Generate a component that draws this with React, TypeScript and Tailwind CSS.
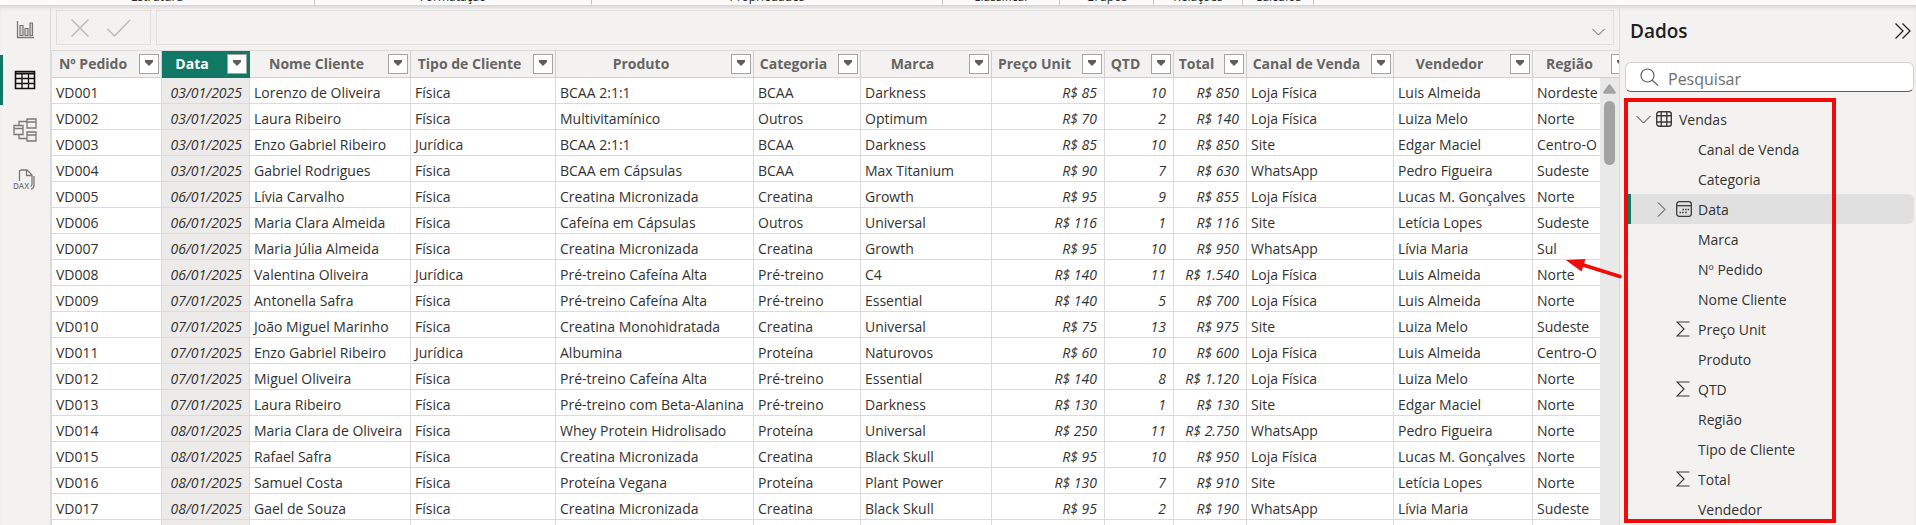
import { useState } from "react";
import { clsx } from "clsx";

type Column = { name: string; width: string; align?: "right"; selected?: boolean };

const columns: Column[] = [
    { name: "Nº Pedido", width: "w-[110px]" },
    { name: "Data", width: "w-[88px]", align: "right", selected: true },
    { name: "Nome Cliente", width: "w-[161px]" },
    { name: "Tipo de Cliente", width: "w-[145px]" },
    { name: "Produto", width: "w-[198px]" },
    { name: "Categoria", width: "w-[107px]" },
    { name: "Marca", width: "w-[131px]" },
    { name: "Preço Unit", width: "w-[113px]", align: "right" },
    { name: "QTD", width: "w-[69px]", align: "right" },
    { name: "Total", width: "w-[73px]", align: "right" },
    { name: "Canal de Venda", width: "w-[147px]" },
    { name: "Vendedor", width: "w-[139px]" },
    { name: "Região", width: "w-[101px]" },
];

const rows: string[][] = [
    ["VD001", "03/01/2025", "Lorenzo de Oliveira", "Física", "BCAA 2:1:1", "BCAA", "Darkness", "R$ 85", "10", "R$ 850", "Loja Física", "Luis Almeida", "Nordeste"],
    ["VD002", "03/01/2025", "Laura Ribeiro", "Física", "Multivitamínico", "Outros", "Optimum", "R$ 70", "2", "R$ 140", "Loja Física", "Luiza Melo", "Norte"],
    ["VD003", "03/01/2025", "Enzo Gabriel Ribeiro", "Jurídica", "BCAA 2:1:1", "BCAA", "Darkness", "R$ 85", "10", "R$ 850", "Site", "Edgar Maciel", "Centro-O"],
    ["VD004", "03/01/2025", "Gabriel Rodrigues", "Física", "BCAA em Cápsulas", "BCAA", "Max Titanium", "R$ 90", "7", "R$ 630", "WhatsApp", "Pedro Figueira", "Sudeste"],
    ["VD005", "06/01/2025", "Lívia Carvalho", "Física", "Creatina Micronizada", "Creatina", "Growth", "R$ 95", "9", "R$ 855", "Loja Física", "Lucas M. Gonçalves", "Norte"],
    ["VD006", "06/01/2025", "Maria Clara Almeida", "Física", "Cafeína em Cápsulas", "Outros", "Universal", "R$ 116", "1", "R$ 116", "Site", "Letícia Lopes", "Sudeste"],
    ["VD007", "06/01/2025", "Maria Júlia Almeida", "Física", "Creatina Micronizada", "Creatina", "Growth", "R$ 95", "10", "R$ 950", "WhatsApp", "Lívia Maria", "Sul"],
    ["VD008", "06/01/2025", "Valentina Oliveira", "Jurídica", "Pré-treino Cafeína Alta", "Pré-treino", "C4", "R$ 140", "11", "R$ 1.540", "Loja Física", "Luis Almeida", "Norte"],
    ["VD009", "07/01/2025", "Antonella Safra", "Física", "Pré-treino Cafeína Alta", "Pré-treino", "Essential", "R$ 140", "5", "R$ 700", "Loja Física", "Luis Almeida", "Norte"],
    ["VD010", "07/01/2025", "João Miguel Marinho", "Física", "Creatina Monohidratada", "Creatina", "Universal", "R$ 75", "13", "R$ 975", "Site", "Luiza Melo", "Sudeste"],
    ["VD011", "07/01/2025", "Enzo Gabriel Ribeiro", "Jurídica", "Albumina", "Proteína", "Naturovos", "R$ 60", "10", "R$ 600", "Loja Física", "Luis Almeida", "Centro-O"],
    ["VD012", "07/01/2025", "Miguel Oliveira", "Física", "Pré-treino Cafeína Alta", "Pré-treino", "Essential", "R$ 140", "8", "R$ 1.120", "Loja Física", "Luiza Melo", "Norte"],
    ["VD013", "07/01/2025", "Laura Ribeiro", "Física", "Pré-treino com Beta-Alanina", "Pré-treino", "Darkness", "R$ 130", "1", "R$ 130", "Site", "Edgar Maciel", "Norte"],
    ["VD014", "08/01/2025", "Maria Clara de Oliveira", "Física", "Whey Protein Hidrolisado", "Proteína", "Universal", "R$ 250", "11", "R$ 2.750", "WhatsApp", "Pedro Figueira", "Norte"],
    ["VD015", "08/01/2025", "Rafael Safra", "Física", "Creatina Micronizada", "Creatina", "Black Skull", "R$ 95", "10", "R$ 950", "Loja Física", "Lucas M. Gonçalves", "Norte"],
    ["VD016", "08/01/2025", "Samuel Costa", "Física", "Proteína Vegana", "Proteína", "Plant Power", "R$ 130", "7", "R$ 910", "Site", "Letícia Lopes", "Norte"],
    ["VD017", "08/01/2025", "Gael de Souza", "Física", "Creatina Micronizada", "Creatina", "Black Skull", "R$ 95", "2", "R$ 190", "WhatsApp", "Lívia Maria", "Sudeste"],
    ["", "", "", "", "", "", "", "", "", "", "", "", ""],
];

const ribbonGroups = [
    { name: "Estrutura", width: "w-[315px]" },
    { name: "Formatação", width: "w-[277px]" },
    { name: "Propriedades", width: "w-[351px]" },
    { name: "Classificar", width: "w-[117px]" },
    { name: "Grupos", width: "w-[94px]" },
    { name: "Relações", width: "w-[89px]" },
    { name: "Cálculos", width: "w-[71px]" },
];

type Field = { name: string; icon?: "sum" | "date" };

const fields: Field[] = [
    { name: "Canal de Venda" },
    { name: "Categoria" },
    { name: "Data", icon: "date" },
    { name: "Marca" },
    { name: "Nº Pedido" },
    { name: "Nome Cliente" },
    { name: "Preço Unit", icon: "sum" },
    { name: "Produto" },
    { name: "QTD", icon: "sum" },
    { name: "Região" },
    { name: "Tipo de Cliente" },
    { name: "Total", icon: "sum" },
    { name: "Vendedor" },
];

const Ribbon = () => (
    <header className="relative z-10 flex h-[5px] items-end overflow-hidden bg-[#fbfbfb] text-xs leading-4 text-[#252423]">
        {ribbonGroups.map((group) => (
            <div key={group.name} className={clsx("shrink-0 border-r border-[#c8c6c4] text-center", group.width)}>
                {group.name}
            </div>
        ))}
    </header>
);

const ReportIcon = () => (
    <svg width="18" height="18" viewBox="0 0 18 18" fill="none" stroke="#7a7876">
        <path d="M1.5 0v16.5H18" strokeWidth="1.300" />
        <path d="M4 4.500h3v10H4zM9 7.500h3v7H9zM14 2h2.500v12.500H14z" fill="#d6d5d4" strokeWidth="1.200" />
    </svg>
);

const TableIcon = () => (
    <svg width="22" height="20" viewBox="0 0 22 20" fill="none" stroke="#111">
        <path d="M1.500 1.500h19v17h-19z" strokeWidth="1.600" />
        <path d="M1 3.500h20" strokeWidth="2" />
        <path d="M1.500 8.500h19M1.500 13.500h19M8 4v14.500M14.500 4v14.500" strokeWidth="1.300" />
    </svg>
);

const ModelIcon = () => (
    <svg width="24" height="24" viewBox="0 0 24 24" fill="none" stroke="#7a7876" strokeWidth="1.300">
        <path d="M1 7.500h9v9H1zM14 1h9v9h-9zM14 14h9v9h-9z" />
        <path d="M1 10.500h9M14 4h9M14 17h9" />
        <path d="M6 7.500V3.500h8M6 16.500v4h8" />
    </svg>
);

const DaxIcon = () => (
    <svg width="24" height="22" viewBox="0 0 24 22" fill="none" stroke="#7a7876" strokeWidth="1.300">
        <path d="M6.500 12V3q0-2 2-2h5.500l5 5v9q0 2-1.500 2.500M13.500 1v5.500H19M21 7v9q0 3.500-3 4" />
        <text x="0" y="20" fontSize="8" fontWeight="600" fill="#7a7876" stroke="none">DAX</text>
    </svg>
);

const views = [
    { label: "Exibição de relatório", icon: <ReportIcon /> },
    { label: "Exibição de tabela", icon: <TableIcon /> },
    { label: "Exibição de modelo", icon: <ModelIcon /> },
    { label: "Exibição de consulta DAX", icon: <DaxIcon /> },
];

const ViewSwitcher = () => {
    const [active, setActive] = useState(1);
    return (
        <nav className="flex w-[50px] shrink-0 flex-col">
            {views.map((view, i) => (
                <button
                    key={view.label}
                    aria-label={view.label}
                    onClick={() => setActive(i)}
                    className={clsx(
                        "flex h-[50px] items-center justify-center border-l-3 pr-[3px]",
                        i === active ? "border-[#117865]" : "border-transparent",
                    )}
                >
                    {view.icon}
                </button>
            ))}
        </nav>
    );
};

const FormulaBar = () => (
    <div className="flex h-[46px] gap-[5px] border-b border-[#dddbd9] px-[5px] pt-[5px] pb-[5px]">
        <div className="flex w-[95px] shrink-0 items-center gap-[18px] border border-[#e1dfdd] pl-[14px]">
            <button aria-label="Cancelar">
                <svg width="18" height="18" viewBox="0 0 18 18" stroke="#b9b7b5" strokeWidth="1.300">
                    <path d="M.5.5l17 17M17.500.5l-17 17" />
                </svg>
            </button>
            <button aria-label="Confirmar">
                <svg width="24" height="18" viewBox="0 0 24 18" fill="none" stroke="#b9b7b5" strokeWidth="1.300">
                    <path d="M.5 10l7 7L23 1" />
                </svg>
            </button>
        </div>
        <div className="flex flex-1 items-center border border-[#e1dfdd] pr-2">
            <input aria-label="Barra de fórmulas" className="h-full flex-1 bg-transparent px-2 outline-none" />
            <button aria-label="Expandir" className="pt-2">
                <svg width="13" height="8" viewBox="0 0 13 8" fill="none" stroke="#605e5c">
                    <path d="M.5 1l6 6 6-6" />
                </svg>
            </button>
        </div>
    </div>
);

const HeaderCell = ({ column }: { column: Column }) => (
    <th
        className={clsx(
            "h-[27px] border-r border-b p-0 font-bold",
            column.selected ? "border-[#117865] bg-[#117865] text-white" : "border-[#d2d0ce] text-[#666563]",
        )}
    >
        <div className="flex items-center pr-[2px]">
            <span className="flex-1 pr-[5px] text-center whitespace-nowrap">{column.name}</span>
            <button
                aria-label={`Filtrar ${column.name}`}
                className="flex size-5 shrink-0 items-center justify-center border border-[#a6a4a2] bg-white pb-[2px]"
            >
                <svg width="8" height="6" viewBox="0 0 8 6" fill="#605e5c">
                    <path d="M0 0h8v2L4 6 0 2z" />
                </svg>
            </button>
        </div>
    </th>
);

const DataTable = () => (
    <div className="relative flex-1 overflow-hidden border-l border-[#dddbd9]">
        <table className="w-[1582px] table-fixed border-separate border-spacing-0 text-sm leading-5">
            <colgroup>
                {columns.map((column) => (
                    <col key={column.name} className={column.width} />
                ))}
            </colgroup>
            <thead>
                <tr>
                    {columns.map((column) => (
                        <HeaderCell key={column.name} column={column} />
                    ))}
                </tr>
            </thead>
            <tbody className="bg-white text-[#333231]">
                {rows.map((row, r) => (
                    <tr key={r}>
                        {row.map((value, c) => (
                            <td
                                key={columns[c].name}
                                className={clsx(
                                    "h-[26px] border-r border-b border-[#dddbd9] pt-1 pb-0 pl-1 whitespace-nowrap",
                                    columns[c].align === "right" ? "pr-[7px] text-right italic" : "pr-0",
                                    columns[c].selected && "bg-[#edebe9]",
                                )}
                            >
                                {value}
                            </td>
                        ))}
                    </tr>
                ))}
            </tbody>
        </table>
        <div className="absolute top-[27px] right-0 bottom-0 flex w-[19px] flex-col items-center gap-[7px] bg-[#e9e9e9] pt-[6px]">
            <svg width="13" height="10" viewBox="0 0 13 10" fill="#a3a3a3">
                <path d="M5.500.8q1-1.200 2 0l5 7q.8 2-1 2h-10q-1.800 0-1-2z" />
            </svg>
            <div className="h-16 w-[11px] rounded-full bg-[#a3a3a3]" />
        </div>
    </div>
);

const SumIcon = () => (
    <svg width="14" height="16" viewBox="0 0 14 16" fill="none" stroke="#3b3a39" strokeWidth="1.200">
        <path d="M13.500 1H1l7 7-7 7h12.500" />
    </svg>
);

const CalendarIcon = () => (
    <svg width="16" height="16" viewBox="0 0 16 16" fill="none" stroke="#3b3a39" strokeWidth="1.300">
        <rect x=".7" y=".7" width="14.600" height="14.600" rx="2.500" />
        <path d="M1 4.700h14" />
        <path d="M6.500 8.500H8M9.200 8.500h1.500M11.700 8.500h1.300M3.500 11.500H5M6.200 11.500h1.500M9.200 11.500h1.500" strokeWidth="1.500" />
    </svg>
);

const GridIcon = () => (
    <svg width="16" height="16" viewBox="0 0 16 16" fill="none" stroke="#3b3a39" strokeWidth="1.400">
        <rect x=".7" y=".7" width="14.600" height="14.600" rx="2.500" />
        <path d="M1 4.700h14M1 11h14M5.200 1v14M10.800 1v14" />
    </svg>
);

const FieldRow = ({ field }: { field: Field }) => {
    const isDate = field.icon === "date";
    return (
        <li>
            <button
                className={clsx(
                    "flex h-[30px] w-full items-center border-l-3",
                    isDate ? "rounded-r-md border-[#117865] bg-[#e0e0e0]" : "border-transparent",
                )}
            >
                <span className="flex w-[45px] justify-center pl-4">
                    {isDate && (
                        <svg width="9" height="15" viewBox="0 0 9 15" fill="none" stroke="#3b3a39">
                            <path d="M1 .5l7 7-7 7" />
                        </svg>
                    )}
                </span>
                <span className="flex w-[22px]">
                    {isDate && <CalendarIcon />}
                    {field.icon === "sum" && <SumIcon />}
                </span>
                <span className="pt-px">{field.name}</span>
            </button>
        </li>
    );
};

const DataPanel = () => (
    <aside className="relative flex w-[297px] shrink-0 flex-col border-l border-[#dddbd9] text-sm text-[#333231]">
        <div className="flex h-[57px] items-center justify-between pr-[5px] pb-[6px] pl-[10px]">
            <h2 className="text-[19px] leading-6 font-semibold text-[#201f1e]">Dados</h2>
            <button aria-label="Recolher painel">
                <svg width="17" height="16" viewBox="0 0 17 16" fill="none" stroke="#252423" strokeWidth="1.300">
                    <path d="M1.500.5L9 8l-7.500 7.500M8.500.5L16 8l-7.500 7.500" />
                </svg>
            </button>
        </div>
        <label className="mr-[2px] ml-[5px] flex h-[30px] items-center gap-[9px] rounded-md border border-[#d2d0ce] border-b-[#605e5c] bg-white pl-[14px]">
            <svg width="19" height="18" viewBox="0 0 19 18" fill="none" stroke="#605e5c" strokeWidth="1.200">
                <circle cx="7.500" cy="7.500" r="6.500" />
                <path d="M12.200 12.200l6 5.500" />
            </svg>
            <input
                type="text"
                aria-label="Pesquisar"
                placeholder="Pesquisar"
                className="min-w-0 flex-1 bg-transparent pt-[3px] text-base outline-none placeholder:text-[#706e6c]"
            />
        </label>
        <div className="mt-3 mr-[2px] ml-2">
            <button className="flex h-[30px] w-full items-center pl-2">
                <svg width="15" height="9" viewBox="0 0 15 9" fill="none" stroke="#3b3a39">
                    <path d="M.5 1l7 7 7-7" />
                </svg>
                <span className="flex w-7 pl-[5px]">
                    <GridIcon />
                </span>
                <span className="pt-px">Vendas</span>
            </button>
            <ul>
                {fields.map((field) => (
                    <FieldRow key={field.name} field={field} />
                ))}
            </ul>
        </div>
        {/* highlight around the table fields, with an arrow to the grid */}
        <div className="pointer-events-none absolute top-[93px] left-1 h-[425px] w-[212px] border-4 border-[#f00a0a]" />
        <svg className="pointer-events-none absolute top-[250px] -left-[54px]" width="58" height="30" viewBox="0 0 58 30">
            <path d="M54 21.500L14 9" stroke="#f00a0a" strokeWidth="3.800" strokeLinecap="round" />
            <path d="M-.5 5l20-1-4 12.500z" fill="#f00a0a" />
        </svg>
    </aside>
);

export default function App() {
    return (
        <div className="flex h-screen flex-col overflow-hidden bg-[#f3f2f1] font-['Open_Sans','Noto_Sans',sans-serif] text-[#333231]">
            <Ribbon />
            <div className="flex min-h-0 flex-1 shadow-[inset_0_4px_4px_-2px_rgba(0,0,0,0.15)]">
                <ViewSwitcher />
                <main className="flex min-w-0 flex-1 flex-col border-l border-[#dddbd9]">
                    <FormulaBar />
                    <DataTable />
                </main>
                <DataPanel />
            </div>
        </div>
    );
}
